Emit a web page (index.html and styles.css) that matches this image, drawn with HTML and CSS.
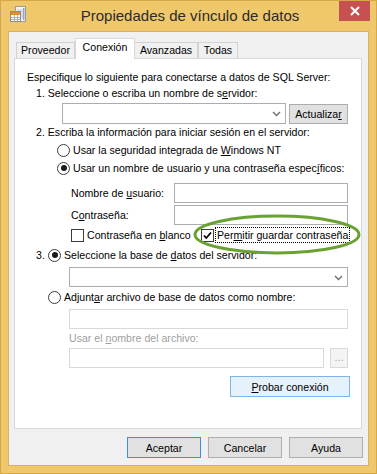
FILE: index.html
```html
<!DOCTYPE html>
<html lang="es">
<head>
<meta charset="utf-8">
<title>Propiedades de vínculo de datos</title>
<link rel="stylesheet" href="styles.css">
</head>
<body>
<div class="window">
  <div class="titlebar">
    <svg class="app-icon" viewBox="9 5 20 22" width="20" height="22">
      <rect x="15.5" y="6.5" width="10" height="15" fill="#f6f6f6" stroke="#9c9c9c"/>
      <path d="M17 10h7M17 12h7M17 14h7M17 16h7M17 18h7" stroke="#b8c4d4"/>
      <rect x="23" y="8" width="1.5" height="12" fill="#9aa6b8"/>
      <rect x="10.5" y="11.5" width="10" height="10" fill="#fff" stroke="#8c8c8c"/>
      <rect x="11" y="12" width="9" height="3" fill="#ea8a2a"/>
      <path d="M11 17.5h9M11 19.5h9M14.5 15v6M17.5 15v6" stroke="#b0b0b0"/>
    </svg>
    <div class="title">Propiedades de vínculo de datos</div>
    <div class="close">
      <svg width="10" height="10" viewBox="0 0 10 10"><path d="M1 1L9 9M9 1L1 9" stroke="#fff" stroke-width="2"/></svg>
    </div>
  </div>
  <div class="client">
    <div class="tabs">
      <div class="tab tab-prov">Proveedor</div>
      <div class="tab tab-con active">Conexión</div>
      <div class="tab tab-ava">Avanzadas</div>
      <div class="tab tab-tod">Todas</div>
    </div>
    <div class="panel">
      <div class="row intro"><span>Especifique lo siguiente para conectarse a datos de SQL Server:</span></div>
      <div class="row step"><span>1. Seleccione o escriba un nombre de s<u>e</u>rvidor:</span></div>
      <div class="row server">
        <div class="combo combo-server">
          <svg class="chev" width="9" height="6" viewBox="0 0 9 6"><path d="M1 1L4.5 4.5L8 1" fill="none" stroke="#6d6d6d" stroke-width="1.4"/></svg>
        </div>
        <div class="btn btn-refresh"><span>Actualiza<u>r</u></span></div>
      </div>
      <div class="row step"><span>2. Escriba la información para iniciar sesión en el servidor:</span></div>
      <div class="row opt"><span class="radio"></span><span>Usar la seguridad integrada de <u>W</u>indows NT</span></div>
      <div class="row opt opt-2"><span class="radio on"></span><span>Usar un nombre de usuario y una contraseña espec<u>í</u>ficos:</span></div>
      <div class="row field field-user"><span class="lbl">Nombre de <u>u</u>suario:</span><span class="input field-input"></span></div>
      <div class="row field field-pass"><span class="lbl">C<u>o</u>ntraseña:</span><span class="input field-input"></span></div>
      <div class="row checks">
        <span class="check-group"><span class="check"></span><span class="ck-lbl">Contraseña en <u>b</u>lanco</span></span>
        <span class="check-group"><span class="check on">
          <svg width="11" height="11" viewBox="0 0 11 11"><path d="M2 5.5L4.3 8L9 2.5" fill="none" stroke="#000" stroke-width="1.8"/></svg>
        </span><span class="ck-lbl focus">Per<u>m</u>itir guardar contraseña</span></span>
      </div>
      <div class="row step3"><span class="num">3.</span><span class="radio on"></span><span>Seleccione la base de <u>d</u>atos del servidor:</span></div>
      <div class="combo combo-db">
        <svg class="chev" width="9" height="6" viewBox="0 0 9 6"><path d="M1 1L4.5 4.5L8 1" fill="none" stroke="#6d6d6d" stroke-width="1.4"/></svg>
      </div>
      <div class="row opt3"><span class="radio"></span><span>Adjunt<u>a</u>r archivo de base de datos como nombre:</span></div>
      <div class="input dis wide"></div>
      <div class="row dim-lbl"><span>Usar el <u>n</u>ombre del archivo:</span></div>
      <div class="row file">
        <span class="input dis file-input"></span>
        <span class="btn dis btn-browse">...</span>
      </div>
      <div class="row test"><div class="btn btn-probe"><span><u>P</u>robar conexión</span></div></div>
    </div>
    <div class="actions">
      <div class="btn btn-action default">Aceptar</div>
      <div class="btn btn-action">Cancelar</div>
      <div class="btn btn-action">Ayuda</div>
    </div>
  </div>
  <svg class="highlight" width="170" height="44" viewBox="0 0 170 44">
    <ellipse cx="84" cy="20.5" rx="82" ry="18.5" fill="none" stroke="#6aa232" stroke-width="3"/>
  </svg>
</div>
</body>
</html>
```

FILE: styles.css
```css
* { box-sizing: border-box; }
html, body { margin: 0; padding: 0; }
body {
  background: #efc86b;
  font-family: "Liberation Sans", Arial, sans-serif;
  font-size: 10.6px;
  color: #000;
}
.window {
  position: relative;
  width: 377px;
  height: 474px;
  border: 1px solid #d6a84a;
  background: #efc86b;
}
.titlebar {
  height: 30px;
  display: flex;
  align-items: flex-start;
}
.app-icon { flex: none; margin: 4px 0 0 8px; }
.title {
  flex: 1;
  text-align: center;
  font-size: 15px;
  color: #2b2b2b;
  line-height: 30px;
  padding-left: 12px;
}
.close {
  flex: none;
  width: 31px;
  height: 20px;
  margin-right: 6px;
  background: #c75050;
  display: flex;
  align-items: center;
  justify-content: center;
}
.client {
  width: 361px;
  height: 435px;
  margin-left: 7px;
  background: #f0f0f0;
  border: 1px solid #d8b262;
  padding: 6px 0 0 5px;
}
.tabs {
  display: flex;
  align-items: flex-start;
  height: 20px;
  padding-left: 2px;
  position: relative;
  z-index: 1;
}
.tab {
  height: 16px;
  margin-top: 4px;
  border: 1px solid #d2d2d2;
  border-bottom: none;
  background: #f0f0f0;
  display: flex;
  align-items: center;
  justify-content: center;
  line-height: 1;
}
.tab-prov { width: 59px; }
.tab-con { width: 60px; }
.tab-ava { width: 64px; margin-left: -1px; }
.tab-tod { width: 40px; }
.tab.active {
  height: 21px;
  margin-top: 0;
  background: #fff;
  border-color: #d9d9d9;
  padding-bottom: 4px;
  position: relative;
  z-index: 2;
}
.panel {
  width: 348px;
  height: 371px;
  background: #fff;
  border: 1px solid #d9d9d9;
  padding-top: 10px;
}
.row {
  display: flex;
  align-items: center;
  height: 16px;
  white-space: nowrap;
}
.intro { padding-left: 12px; }
.step { padding-left: 21px; }
.server { height: 21px; margin-top: 2px; padding-left: 47px; }
.combo {
  position: relative;
  height: 20px;
  background: #fff;
  border: 1px solid #abadb3;
}
.chev { position: absolute; top: 7px; right: 4px; }
.combo-server { width: 224px; height: 21px; }
.btn {
  display: flex;
  align-items: center;
  justify-content: center;
  height: 21px;
  background: #e1e1e1;
  border: 1px solid #adadad;
  white-space: nowrap;
}
.btn-refresh { width: 59px; margin-left: 3px; height: 20px; }
.opt { margin-top: 2px; padding-left: 42px; }
.radio {
  flex: none;
  position: relative;
  width: 13px;
  height: 13px;
  border: 1px solid #3c3c3c;
  border-radius: 50%;
  background: #fff;
  margin-right: 3px;
}
.radio.on::after {
  content: "";
  position: absolute;
  left: 2.5px;
  top: 2.5px;
  width: 6px;
  height: 6px;
  border-radius: 50%;
  background: #1a1a1a;
}
.field { height: 20px; padding-left: 56px; }
.field-user { margin-top: 7px; }
.field-pass { margin-top: 2px; }
.lbl { width: 103px; flex: none; }
.input {
  display: block;
  height: 20px;
  background: #fff;
  border: 1px solid #abadb3;
}
.field-input { width: 174px; }
.checks { margin-top: 2px; padding-left: 56px; }
.check-group { display: flex; align-items: center; }
.check-group:first-child { width: 130px; }
.check {
  flex: none;
  width: 13px;
  height: 13px;
  border: 1px solid #3c3c3c;
  background: #fff;
  margin-right: 3px;
  display: flex;
  align-items: center;
  justify-content: center;
}
.ck-lbl.focus {
  margin-left: -1px;
  padding: 1px 1px;
  outline: 1px dotted #000;
  outline-offset: 0;
  line-height: 12px;
}
.step3 { margin-top: 4px; padding-left: 21px; }
.num { width: 12px; flex: none; }
.combo-db { width: 279px; margin: 4px 0 0 54px; }
.opt3 { margin-top: 2px; padding-left: 33px; }
.wide { width: 279px; margin: 4px 0 0 54px; }
.input.dis { border-color: #d9d9d9; }
.dim-lbl { margin-top: 1px; padding-left: 54px; color: #a0a0a0; }
.file { height: 20px; margin-top: 2px; padding-left: 54px; }
.file-input { width: 255px; }
.btn-browse {
  width: 18px;
  height: 20px;
  margin-left: 6px;
  background: #f4f4f4;
  border-color: #d9d9d9;
  color: #a0a0a0;
  align-items: flex-end;
  padding-bottom: 4px;
}
.test { height: 21px; margin-top: 8px; justify-content: flex-end; padding-right: 11px; }
.btn-probe { width: 120px; background: #e5f1fb; border-color: #7eb4ea; }
.actions {
  display: flex;
  justify-content: flex-end;
  gap: 7px;
  margin-top: 8px;
  padding-right: 5px;
}
.btn-action { width: 74px; }
.btn-action.default { border-color: #3c8ee3; }
.highlight {
  position: absolute;
  left: 192px;
  top: 213px;
}
```
